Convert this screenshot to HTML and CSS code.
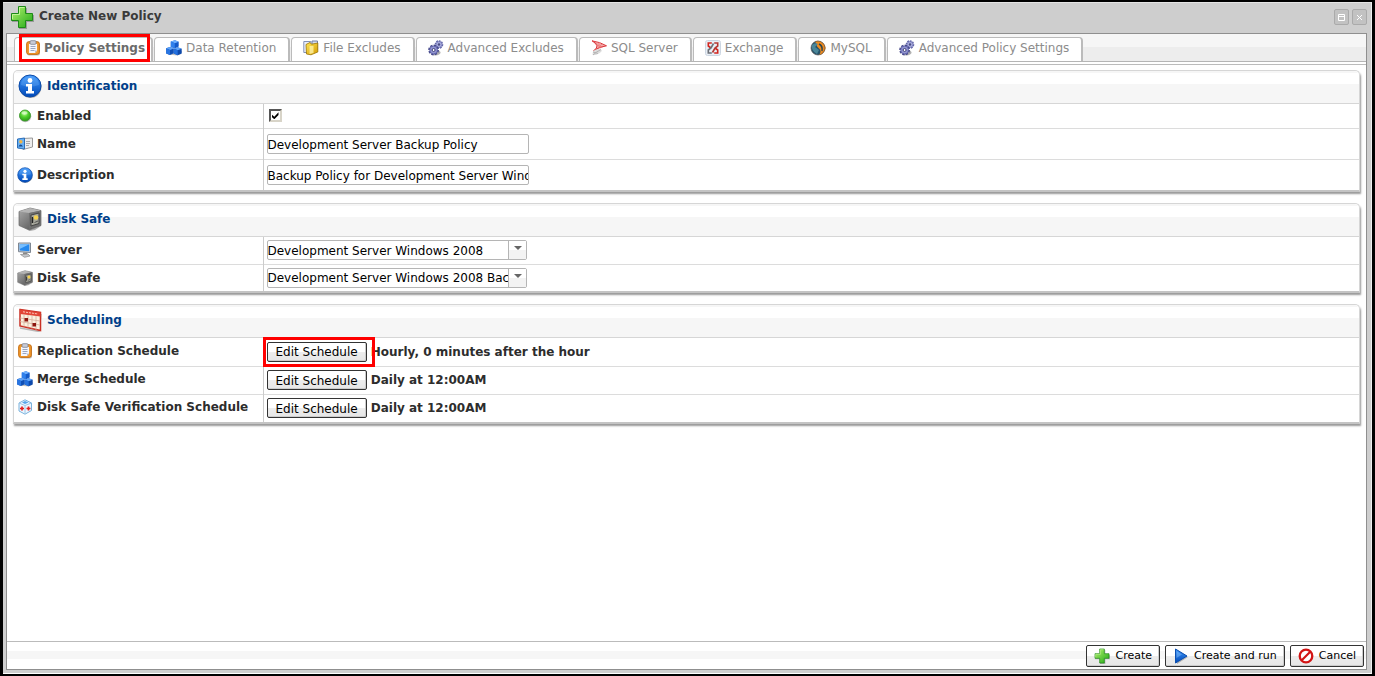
FILE: index.html
```html
<!DOCTYPE html>
<html lang="en">
<head>
<meta charset="utf-8">
<title>Create New Policy</title>
<link rel="stylesheet" href="styles.css">
</head>
<body>
<svg class="defs" aria-hidden="true">
  <defs>
    <linearGradient id="green" x1="0" y1="0" x2="1" y2="1"><stop offset="0" stop-color="#b4f26e"/><stop offset="1" stop-color="#1fa816"/></linearGradient>
    <linearGradient id="blue" x1="0" y1="0" x2="0" y2="1"><stop offset="0" stop-color="#3f97fb"/><stop offset="1" stop-color="#0049b8"/></linearGradient>
    <linearGradient id="steel" x1="0" y1="0" x2="1" y2="1"><stop offset="0" stop-color="#aaa"/><stop offset="1" stop-color="#4a4a4a"/></linearGradient>
    <linearGradient id="gold" x1="0" y1="0" x2="1" y2="1"><stop offset="0" stop-color="#ffe75a"/><stop offset="1" stop-color="#d39a00"/></linearGradient>
    <radialGradient id="ball" cx=".45" cy=".3" r=".7"><stop offset="0" stop-color="#b6ff8a"/><stop offset=".5" stop-color="#4fd02c"/><stop offset="1" stop-color="#2a9a15"/></radialGradient>
  </defs>
  <symbol id="plus" viewBox="0 0 24 24">
    <path d="M9 3h8v7h7v7h-7v7H9v-7H2v-7h7z" fill="#000" opacity=".25"/>
    <path d="M8.500 1.500h7v7h7v7h-7v7h-7v-7h-7v-7h7z" fill="url(#green)" stroke="#1d8a17" stroke-linejoin="round"/>
    <path d="M9.500 9.500v-7h5M2.500 14v-4.500h7" fill="none" stroke="#d8ffb0" opacity=".7"/>
  </symbol>
  <symbol id="info" viewBox="0 0 24 24">
    <circle cx="12.500" cy="13" r="11" fill="#000" opacity=".3"/>
    <circle cx="12" cy="12" r="11" fill="url(#blue)" stroke="#0b4aa8"/>
    <path d="M3 11a9 9 0 0 1 18 0q-9 3-18 0z" fill="#8cc6ff" opacity=".25"/>
    <circle cx="12" cy="6.500" r="2.400" fill="#fff"/>
    <path d="M8 10h6v7h2v2.500H8V17h2v-4.500H8z" fill="#fff"/>
  </symbol>
  <symbol id="clipboard" viewBox="0 0 16 16">
    <rect x="2" y="2.500" width="13" height="13" rx="2" fill="#000" opacity=".25"/>
    <rect x="1.700" y="1.700" width="12.600" height="12.600" rx="2" fill="#f39a2d" stroke="#c46a0c"/>
    <path d="M4 4h8v6.500L10 13H4z" fill="#f4f6fc"/><path d="M12 10.500h-2V13z" fill="#b9bed0"/>
    <path d="M5.500 6.500h5M5.500 8.500h5M5.500 10.500h4" stroke="#8f9cba" stroke-width=".9"/>
    <rect x="5" y=".7" width="6" height="3.600" rx="1" fill="#c9ccd6" stroke="#7c8190" stroke-width=".8"/>
  </symbol>
  <symbol id="cubes" viewBox="0 0 16 16">
    <path d="M2 14.500 8 13l8-2-1 3-3.500 1.500z" fill="#000" opacity=".25"/>
    <path d="M4.800 1.500 9 .3l3.700 1.500v4.700L9 8.300 4.800 7z" fill="#1259c8"/><path d="M4.800 1.500 9 .3l3.700 1.500L8.800 3.300z" fill="#6db0ff"/><path d="M4.800 1.500l4 1.800v5l-4-1.300z" fill="#2f80ec"/>
    <path d="M.2 8.300 3.800 7l4 1.400v4.800L4 15 .2 13.500z" fill="#0f4fb6"/><path d="M.2 8.300 3.800 7l4 1.400L4 9.900z" fill="#5ea4fa"/><path d="M.2 8.300 4 9.900V15L.2 13.500z" fill="#2875e2"/>
    <path d="M7.800 8.700 11.700 7.200l4 1.500v4.700l-4 1.900-3.900-1.700z" fill="#0d49ac"/><path d="M7.800 8.700 11.700 7.200l4 1.500-4 1.600z" fill="#5ea4fa"/><path d="M7.800 8.700l3.900 1.600v5l-3.900-1.700z" fill="#2370de"/>
  </symbol>
  <symbol id="folder" viewBox="0 0 16 16">
    <path d="M.8 1.500h7v11h-7z" fill="#e9eefb" stroke="#8291b8"/><path d="M9 1h5.500v9H9z" fill="#d4dcf0" stroke="#707fa6"/>
    <path d="M3 4.500 7 2.500l1.500 1.700L14.800 3v9L8 14.800 3.500 14z" fill="url(#gold)" stroke="#9a7400" stroke-width=".8"/>
    <path d="M6.500 6h4v7l-4 1z" fill="#fff6b0" opacity=".75"/>
  </symbol>
  <symbol id="gears" viewBox="0 0 16 16">
    <ellipse cx="7.500" cy="12.500" rx="5" ry="3" fill="#000" opacity=".3"/>
    <circle cx="11" cy="4.500" r="3.300" fill="none" stroke="#6265a8" stroke-width="2" stroke-dasharray="1.700 .8"/>
    <circle cx="11" cy="4.500" r="3" fill="#a9acdf" stroke="#6265a8" stroke-width=".6"/><circle cx="11" cy="4.500" r="1.200" fill="#4a4c80"/>
    <circle cx="5.600" cy="10" r="4.300" fill="none" stroke="#474a8c" stroke-width="2.200" stroke-dasharray="2.200 1.100"/>
    <circle cx="5.600" cy="10" r="3.900" fill="#9396d2" stroke="#5154a0" stroke-width=".7"/><circle cx="5.600" cy="10" r="1.500" fill="#fff" stroke="#3e4078"/>
  </symbol>
  <symbol id="sql" viewBox="0 0 16 16">
    <path d="M1 .8 8 3l7.500 2.800L9 8.500 2.500 11 6 6.500z" fill="#f5a9a9"/>
    <path d="M1 .8Q9 2 15.500 5.800 8 6.500 2.500 11 6.500 8 6 5.500T1 .8z" fill="none" stroke="#d9383c"/>
    <path d="m5 4 5 3M8 3v5M11 4 7 8" stroke="#e77" stroke-width=".7"/>
    <path d="M2 11q5-3 8-1.500T5 15H1.500z" fill="#ddd"/><path d="M2 15q3-3 8-5.500M2 12l5 1.500" stroke="#aaa" stroke-width=".8" fill="none"/>
  </symbol>
  <symbol id="exchange" viewBox="0 0 16 16">
    <rect x=".5" y=".5" width="15" height="15" rx="2" fill="#e8eef5" stroke="#ccd6e2"/>
    <g fill="none" stroke-width="1.600">
      <path d="M6.800 3H3.300v3L6 8" stroke="#d3261f"/><path d="M9.200 13h3.500v-3L10 8" stroke="#d3261f"/>
      <path d="M9.200 3h3.500v3L10 8 7.500 12.500" stroke="#b53832"/><path d="M6.800 13H3.300v-3L6 8l2.500-4.500" stroke="#6d7178"/>
    </g>
  </symbol>
  <symbol id="mysql" viewBox="0 0 16 16">
    <circle cx="8" cy="8" r="7" fill="#27536b"/>
    <path d="M5 1.500Q9-.5 13 3t2 7q-2 5-6 5 3-4 0-6.500T7 5z" fill="#f08a1d"/>
    <path d="M2 5q3-3 6-1L5 7l4 3-2 4Q1 11 2 5z" fill="#4a8698"/><path d="M9 4q4 2 3 7" stroke="#274452" stroke-width="1.500" fill="none"/>
    <circle cx="8" cy="8" r="7" fill="none" stroke="#555" stroke-width=".7"/>
  </symbol>
  <symbol id="ball-on" viewBox="0 0 16 16"><circle cx="8.300" cy="8.300" r="6" fill="#000" opacity=".25"/><circle cx="8" cy="7.500" r="5.500" fill="url(#ball)" stroke="#3b9a2a" stroke-width=".8"/><ellipse cx="7.500" cy="5" rx="3" ry="1.700" fill="#fff" opacity=".5"/></symbol>
  <symbol id="card" viewBox="0 0 16 16">
    <path d="M6 2.500 15.500 2v9L6 13.500z" fill="#ededed" stroke="#999"/><path d="M9 5.500h4M9 7.500h4M9 9.500h3" stroke="#aaa"/>
    <path d="M.5 3 7.500 2v11l-7-1z" fill="#67b0f4" stroke="#2e6fb8"/><circle cx="3.800" cy="5.800" r="1.700" fill="#f3b340"/><path d="M1.500 10.500q2-4 4.500 0z" fill="#17478a"/>
  </symbol>
  <symbol id="safe" viewBox="0 0 24 24">
    <path d="m1 18 9 5 13-4-6 4-5 1z" fill="#000" opacity=".3"/>
    <path d="M1 4.500 12 1l11 2.500v15L11 23 1 18.500z" fill="url(#steel)" stroke="#666" stroke-width=".7"/>
    <path d="M1 4.500 12 1l11 2.500L11 6z" fill="#b4b4b4"/><path d="M11 6l12-2.500v15L11 22z" fill="#707070"/>
    <path d="m13 8 8-2v10.500L13 19z" fill="#a7a79c" stroke="#444"/><path d="M14.500 10v6" stroke="#222" stroke-width="1.400"/>
    <circle cx="18" cy="10.500" r="2.300" fill="#f6d24e"/><path d="M16.500 15.500 20 14" stroke="#555"/>
  </symbol>
  <symbol id="monitor" viewBox="0 0 16 16">
    <path d="M1.500 1h12v9.500l-12-.8z" fill="#c9ced6" stroke="#7e8792"/><path d="M2.700 2.200h9.600v7l-9.600-.6z" fill="#2589ee"/><path d="M2.700 2.200h9.600L2.700 7z" fill="#78bfff"/>
    <path d="M6 10.500h4l.5 2H6z" fill="#888"/><path d="M3.500 12.500 11 12l2 2-5.500 1.300z" fill="#c4c7cb" stroke="#888" stroke-width=".7"/>
  </symbol>
  <symbol id="calendar" viewBox="0 0 24 24">
    <path d="M2 20 21 23.500 23 6" fill="none" stroke="#000" stroke-width="1.500" opacity=".25"/>
    <path d="M2 1.500 22.500 4.500v18L2 18z" fill="#fbf1df" stroke="#c93024" stroke-width="1.500"/>
    <path d="M2 1.500 22.500 4.500v4L2 6z" fill="#e24637"/><path d="M5 3.800 20 6" stroke="#ffc9b8" stroke-dasharray="2 1"/>
    <path d="M2 10l20 3M2 13.500l20 3.500M6 6.500v12M10 7v12.500M14 7.500v13M18 8v14" stroke="#d6ae9c" stroke-width=".8"/>
    <path d="M6.500 10h3.500v3.500H6.500zM14.500 15h3.500v3.500h-3.500z" fill="#8d160e"/>
  </symbol>
  <symbol id="verify" viewBox="0 0 16 16">
    <path d="M2 4 8 .8 14.500 4v7.500L8 15.200 2 12z" fill="#eef7ff" stroke="#7ab2dc"/><path d="M2 4l6 2.500L14.500 4M8 6.500V15" fill="none" stroke="#9cc6e6"/>
    <path d="M5 3.500 8 2l3.500 1.500L8 5z" fill="#56a6ea"/><path d="M3 9.500h4M5 7.500v4M9.500 9.500h4M11.500 7.500v4" stroke="#e02020" stroke-width="1.700"/>
  </symbol>
  <symbol id="play" viewBox="0 0 16 16"><path d="m4 2 11 7-11 7z" fill="#000" opacity=".25"/><path d="M2.500 1 14 8 2.500 15z" fill="url(#blue)" stroke="#0b4fb0" stroke-linejoin="round"/><path d="M3.500 3v7L9 6.500z" fill="#9cd0ff" opacity=".4"/></symbol>
  <symbol id="stop" viewBox="0 0 16 16"><circle cx="8" cy="8" r="6.300" fill="#fff" stroke="#d21414" stroke-width="2.300"/><path d="m3.500 12.500 9-9" stroke="#d21414" stroke-width="2.200"/></symbol>
</svg>

<main class="window">
  <header class="titlebar">
    <svg class="icon-lg"><use href="#plus"/></svg>
    <h1 class="title">Create New Policy</h1>
    <div class="tools">
      <button class="tool" type="button" aria-label="Maximize"><svg viewBox="0 0 13 13"><path d="M3.500 3.500h6v6h-6zM3 5.500h7" fill="none" stroke="#fff"/></svg></button>
      <button class="tool" type="button" aria-label="Close"><svg viewBox="0 0 13 13"><path d="m4 4 5 5M9 4 4 9" fill="none" stroke="#fff"/></svg></button>
    </div>
  </header>

  <div class="frame">
    <nav class="tabs">
      <button class="tab tab-active" type="button"><svg class="icon"><use href="#clipboard"/></svg>Policy Settings</button>
      <button class="tab" type="button"><svg class="icon"><use href="#cubes"/></svg>Data Retention</button>
      <button class="tab" type="button"><svg class="icon"><use href="#folder"/></svg>File Excludes</button>
      <button class="tab" type="button"><svg class="icon"><use href="#gears"/></svg>Advanced Excludes</button>
      <button class="tab" type="button"><svg class="icon"><use href="#sql"/></svg>SQL Server</button>
      <button class="tab" type="button"><svg class="icon"><use href="#exchange"/></svg>Exchange</button>
      <button class="tab" type="button"><svg class="icon"><use href="#mysql"/></svg>MySQL</button>
      <button class="tab" type="button"><svg class="icon"><use href="#gears"/></svg>Advanced Policy Settings</button>
    </nav>

    <div class="content">
      <section class="group">
        <h2 class="group-head"><svg class="icon-lg"><use href="#info"/></svg>Identification</h2>
        <table class="form">
          <tr class="row-check"><th scope="row"><label class="name" for="enabled"><svg class="icon"><use href="#ball-on"/></svg>Enabled</label></th><td><input class="check" id="enabled" type="checkbox" checked></td></tr>
          <tr class="row-text"><th scope="row"><label class="name" for="name"><svg class="icon"><use href="#card"/></svg>Name</label></th><td><input class="text" id="name" type="text" value="Development Server Backup Policy"></td></tr>
          <tr class="row-text"><th scope="row"><label class="name" for="description"><svg class="icon"><use href="#info"/></svg>Description</label></th><td><input class="text" id="description" type="text" value="Backup Policy for Development Server Windows 2008"></td></tr>
        </table>
      </section>

      <section class="group">
        <h2 class="group-head"><svg class="icon-lg"><use href="#safe"/></svg>Disk Safe</h2>
        <table class="form">
          <tr class="row-select"><th scope="row"><label class="name" for="server"><svg class="icon"><use href="#monitor"/></svg>Server</label></th><td><div class="combo"><select class="select" id="server"><option>Development Server Windows 2008</option></select></div></td></tr>
          <tr class="row-select"><th scope="row"><label class="name" for="safe-list"><svg class="icon"><use href="#safe"/></svg>Disk Safe</label></th><td><div class="combo"><select class="select" id="safe-list"><option>Development Server Windows 2008 Backup</option></select></div></td></tr>
        </table>
      </section>

      <section class="group">
        <h2 class="group-head"><svg class="icon-lg"><use href="#calendar"/></svg>Scheduling</h2>
        <table class="form">
          <tr class="row-button"><th scope="row"><span class="name"><svg class="icon"><use href="#clipboard"/></svg>Replication Schedule</span></th><td><div class="schedule"><span class="marked"><button class="button" type="button">Edit Schedule</button></span>Hourly, 0 minutes after the hour</div></td></tr>
          <tr class="row-button"><th scope="row"><span class="name"><svg class="icon"><use href="#cubes"/></svg>Merge Schedule</span></th><td><div class="schedule"><button class="button" type="button">Edit Schedule</button>Daily at 12:00AM</div></td></tr>
          <tr class="row-button"><th scope="row"><span class="name"><svg class="icon"><use href="#verify"/></svg>Disk Safe Verification Schedule</span></th><td><div class="schedule"><button class="button" type="button">Edit Schedule</button>Daily at 12:00AM</div></td></tr>
        </table>
      </section>
    </div>

    <footer class="actions">
      <button class="button button-icon" type="button"><svg class="icon"><use href="#plus"/></svg>Create</button>
      <button class="button button-icon" type="button"><svg class="icon"><use href="#play"/></svg>Create and run</button>
      <button class="button button-icon" type="button"><svg class="icon"><use href="#stop"/></svg>Cancel</button>
    </footer>
  </div>
</main>
</body>
</html>
```
FILE: styles.css
```css
* { box-sizing: border-box; }

body {
  margin: 0;
  padding: 2px 3px;
  height: 100vh;
  background: #000;
  color: #2d2d2d;
  font: 12px/16px Verdana, "DejaVu Sans", sans-serif;
}

.defs { position: absolute; width: 0; height: 0; }
.icon { width: 16px; height: 16px; flex: none; }
.icon-lg { width: 24px; height: 24px; flex: none; }

.window {
  display: flex;
  flex-direction: column;
  height: 100%;
  padding: 0 4px 3px 3px;
  background: #cecece;
  border-top: 1px solid #e4e4e4;
  border-right: 1px solid #eee;
  border-bottom: 1px solid #fff;
}

.titlebar {
  display: flex;
  align-items: center;
  height: 30px;
  padding: 0 0 2px 4px;
  gap: 5px;
}
.title { margin: 0; padding-bottom: 2px; flex: 1; font-size: 12px; line-height: 16px; color: #3a3a3a; }
.tools { display: flex; gap: 3px; }
.tool {
  width: 15px;
  height: 16px;
  padding: 0;
  border: 1px solid #aaa;
  border-radius: 2px;
  background: #c2c2c2;
}
.tool svg { display: block; width: 13px; height: 13px; }

.frame {
  display: flex;
  flex: 1;
  flex-direction: column;
  min-height: 0;
  border: 1px solid #8f8f8f;
  background: #fff;
}

.tabs {
  display: flex;
  align-items: flex-end;
  gap: 1px;
  height: 28px;
  padding: 0 7px;
  border-bottom: 1px solid #b5b5b5;
  background: linear-gradient(#f6f6f6 13px, #ededed 13px);
}
.tab {
  display: flex;
  align-items: center;
  gap: 4px;
  height: 24px;
  padding: 0 12px 3px 11px;
  border: 1px solid #bbb;
  border-right-width: 2px;
  border-bottom: 0;
  border-radius: 4px 4px 0 0;
  background: #fff;
  color: #8c8c8c;
  font: inherit;
  white-space: nowrap;
}
.tab-active {
  position: relative;
  gap: 3px;
  padding: 0 6px 3px 10px;
  color: #6b6b6b;
  font-weight: bold;
}
.tab-active::after {
  content: "";
  position: absolute;
  inset: -4px 1px -1px 4px;
  border: 3px solid #f00;
}

.content {
  display: flex;
  flex: 1;
  flex-direction: column;
  gap: 11px;
  margin-top: 2px;
  padding: 5px 6px;
  border: solid #bbb;
  border-width: 1px 0;
  min-height: 0;
}

.group {
  border: 1px solid #d6d6d6;
  border-bottom: 2px solid #c4c4c4;
  border-radius: 5px 5px 0 0;
  box-shadow: 1px 2px 2px #999;
}
.group-head {
  display: flex;
  align-items: center;
  gap: 5px;
  height: 33px;
  margin: 0;
  padding: 0 0 2px 4px;
  border-bottom: 1px solid #d6d6d6;
  border-radius: 5px 5px 0 0;
  background: linear-gradient(#f6f6f6 2px, #fff 2px, #fff 13px, #f6f6f6 13px);
  color: #003f8a;
  font-size: 12px;
  line-height: 16px;
}

.form { width: 100%; border-collapse: collapse; table-layout: fixed; }
.form th, .form td { padding: 0 3px; text-align: left; vertical-align: middle; border-top: 1px solid #dcdcdc; }
.form th { width: 249px; border-right: 1px solid #ccc; }
.form tr:first-child th, .form tr:first-child td { border-top: 0; }
.name { display: flex; align-items: center; gap: 4px; }
.row-check { height: 24px; }
.row-text { height: 31px; }
.row-select { height: 27px; }
.row-button { height: 28px; }
.row-button .name { padding-bottom: 2px; }

.check {
  display: grid;
  place-items: center;
  width: 13px;
  height: 13px;
  margin: 0 2px;
  appearance: none;
  background: #fff;
  border: 2px solid #d8d4c8;
  border-top-color: #555;
  border-left-color: #555;
}
.check:checked::before {
  content: "";
  width: 7px;
  height: 7px;
  background: #000;
  clip-path: polygon(0 30%, 40% 65%, 100% 0, 100% 40%, 40% 100%, 0 65%);
}

.text, .select {
  display: block;
  height: 20px;
  border: 1px solid #b5b5b5;
  border-radius: 2px;
  background: #fff;
  color: #000;
  font: 12px/16px Verdana, "DejaVu Sans", sans-serif;
}
.text { width: 262px; padding: 2px 0 0; }
.combo { position: relative; width: 260px; }
.select { width: 100%; padding: 1px 17px 0 0; appearance: none; }
.combo::before {
  content: "";
  position: absolute;
  inset: 1px 1px 1px auto;
  width: 17px;
  border-left: 1px solid #b5b5b5;
  background: linear-gradient(#fff 50%, #f3f3f3 50%);
  pointer-events: none;
}
.combo::after {
  content: "";
  position: absolute;
  top: 6px;
  right: 5px;
  border: 4px solid transparent;
  border-top-color: #666;
  border-bottom: 0;
  pointer-events: none;
}

.schedule { display: flex; align-items: center; gap: 4px; font-weight: bold; }
.marked { position: relative; }
.marked::after {
  content: "";
  position: absolute;
  inset: -5px -8px -5px -4px;
  border: 3px solid #f00;
  pointer-events: none;
}

.button {
  display: flex;
  align-items: center;
  height: 20px;
  padding: 1px 8px 0;
  border: 1px solid #333;
  border-radius: 2px;
  background: linear-gradient(#fff 50%, #ededed 50%, #e6e6e6);
  box-shadow: inset -1px -1px #ccc;
  color: #000;
  font: 12px/16px Verdana, "DejaVu Sans", sans-serif;
  white-space: nowrap;
}
.button-icon { height: 22px; gap: 5px; padding: 0 7px; font-size: 11px; }

.actions {
  display: flex;
  justify-content: flex-end;
  align-items: center;
  gap: 5px;
  height: 27px;
  padding: 0 2px 0 3px;
  background: linear-gradient(#fff 9px, #f6f6f6 9px, #f6f6f6 17px, #fff 17px);
}
```
